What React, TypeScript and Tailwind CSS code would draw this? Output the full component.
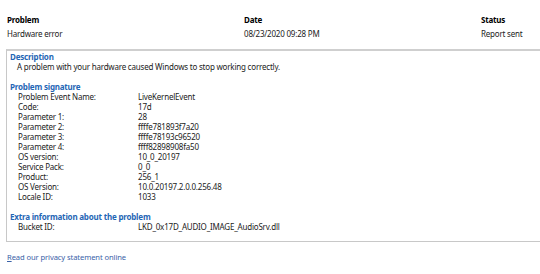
import React from "react";

const rows: [string, string][] = [
  ["Problem Event Name:", "LiveKernelEvent"],
  ["Code:", "17d"],
  ["Parameter 1:", "28"],
  ["Parameter 2:", "ffffe781893f7a20"],
  ["Parameter 3:", "ffffe78193c96520"],
  ["Parameter 4:", "ffff82898908fa50"],
  ["OS version:", "10_0_20197"],
  ["Service Pack:", "0_0"],
  ["Product:", "256_1"],
  ["OS Version:", "10.0.20197.2.0.0.256.48"],
  ["Locale ID:", "1033"],
];

function Row({ label, value }: { label: string; value: string }) {
  return (
    <div className="flex h-[10px] items-center">
      <div className="w-[128px] pl-[8px]">{label}</div>
      <div>{value}</div>
    </div>
  );
}

export default function App() {
  return (
    <div
      className="w-[540px] h-[274px] overflow-hidden bg-white text-[#222] text-[8px] leading-[10px] tracking-[-0.2px]"
      style={{ fontFamily: '"Noto Sans", "Open Sans", sans-serif' }}
    >
      <div className="pt-[13px] pl-[7px]">
        <div className="flex h-[14px] items-center font-bold text-black">
          <div className="w-[237px]">Problem</div>
          <div className="w-[237px]">Date</div>
          <div>Status</div>
        </div>
        <div className="flex h-[14px] items-center">
          <div className="w-[237px]">Hardware error</div>
          <div className="w-[237px]">08/23/2020 09:28 PM</div>
          <div>Report sent</div>
        </div>
      </div>
      <div className="mt-[8px] ml-[6px] w-[540px] border border-[#c8c8c8] border-t-2 border-t-[#cfcfcf] pt-[1px] pb-[9px] pl-[3px]">
        <div className="flex h-[10px] items-center font-bold text-[#1f66b5]">Description</div>
        <div className="flex h-[10px] items-center pl-[7px]">
          A problem with your hardware caused Windows to stop working correctly.
        </div>
        <div className="mt-[10px] flex h-[10px] items-center font-bold text-[#1f66b5]">Problem signature</div>
        {rows.map(([l, v]) => (
          <Row key={l} label={l} value={v} />
        ))}
        <div className="mt-[10px] flex h-[10px] items-center font-bold text-[#1f66b5]">
          Extra information about the problem
        </div>
        <Row label="Bucket ID:" value="LKD_0x17D_AUDIO_IMAGE_AudioSrv.dll" />
      </div>
      <div className="mt-[8px] pl-[7px] flex h-[14px] items-center text-[7.6px] tracking-[-0.1px] text-[#3a62a8]">
        <span>
          <span className="underline">R</span>ead our privacy statement online
        </span>
      </div>
    </div>
  );
}
